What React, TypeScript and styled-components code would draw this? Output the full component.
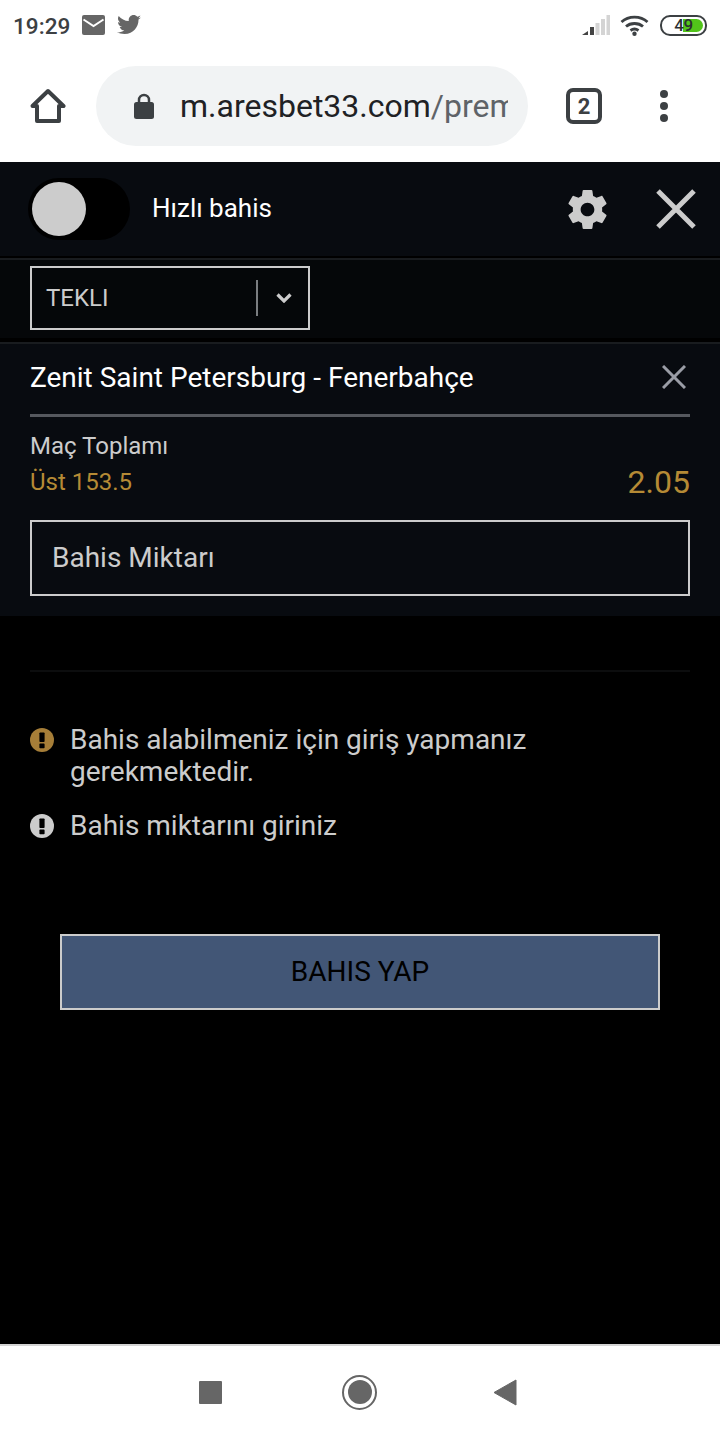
import React from "react";
import styled, { createGlobalStyle } from "styled-components";

const Global = createGlobalStyle`
  html, body { margin: 0; padding: 0; background: #000; }
  body { font-family: Roboto, "Noto Sans", sans-serif; }
  * { box-sizing: border-box; }
`;

const Page = styled.div`
  width: 720px;
  height: 1440px;
  display: flex;
  flex-direction: column;
  background: #000;
  overflow: hidden;
`;

const StatusBar = styled.div`
  height: 54px;
  flex: none;
  background: #fff;
  display: flex;
  align-items: center;
  justify-content: space-between;
  padding: 0 13px 4px 13px;
`;

const StatusGroup = styled.div<{ $gap: number }>`
  display: flex;
  align-items: center;
  gap: ${(p) => p.$gap}px;
`;

const Clock = styled.span`
  font-size: 22.6px;
  font-weight: 500;
  color: #3c4043;
  position: relative;
  top: 1px;
`;

const Battery = styled.div`
  width: 47px;
  height: 21px;
  margin-left: 1px;
  border: 2px solid #3c4043;
  border-radius: 10px;
  position: relative;
  overflow: hidden;
  background: #fff;
`;

const BatteryFill = styled.div`
  position: absolute;
  left: 21px;
  top: 2px;
  bottom: 2px;
  right: 2px;
  background: #52c41a;
  border-radius: 0 7px 7px 0;
`;

const BatteryLabel = styled.span`
  position: absolute;
  inset: 0;
  display: flex;
  align-items: center;
  justify-content: center;
  font-size: 17px;
  font-weight: 500;
  color: #2b2f33;
  letter-spacing: -0.5px;
`;

const Toolbar = styled.div`
  height: 108px;
  flex: none;
  background: #fff;
  display: flex;
  align-items: flex-start;
  padding: 12px 0 0 0;
`;

const HomeSlot = styled.div`
  width: 96px;
  height: 80px;
  flex: none;
  display: flex;
  align-items: center;
  justify-content: center;
`;

const Omnibox = styled.div`
  width: 432px;
  height: 80px;
  flex: none;
  border-radius: 40px;
  background: #f1f3f4;
  display: flex;
  align-items: center;
  padding-left: 38px;
  gap: 26px;
`;

const Url = styled.div`
  width: 328px;
  overflow: hidden;
  white-space: nowrap;
  font-size: 32px;
  color: #202124;
`;

const UrlPath = styled.span`
  color: #5f6368;
`;

const TabsSlot = styled.div`
  width: 38px;
  height: 80px;
  margin-left: 37px;
  flex: none;
  display: flex;
  align-items: center;
  justify-content: center;
`;

const TabCount = styled.div`
  width: 36px;
  height: 36px;
  border: 4px solid #3c4043;
  border-radius: 7px;
  display: flex;
  align-items: center;
  justify-content: center;
  font-size: 22px;
  font-weight: 700;
  color: #3c4043;
`;

const MenuSlot = styled.div`
  width: 12px;
  height: 80px;
  margin-left: 55px;
  flex: none;
  display: flex;
  flex-direction: column;
  align-items: center;
  justify-content: center;
  gap: 4px;
`;

const MenuDot = styled.span`
  width: 8px;
  height: 8px;
  border-radius: 50%;
  background: #3c4043;
`;

const Header = styled.div`
  height: 96px;
  flex: none;
  background: #080b10;
  border-bottom: 2px solid #000;
  display: flex;
  align-items: center;
  padding: 0 24px 0 28px;
`;

const Toggle = styled.div`
  width: 102px;
  height: 62px;
  flex: none;
  background: #000;
  border-radius: 31px;
  display: flex;
  align-items: center;
  padding-left: 4px;
`;

const Knob = styled.span`
  width: 54px;
  height: 54px;
  border-radius: 50%;
  background: #cccccc;
`;

const HeaderLabel = styled.span`
  margin: 0 0 2px 22px;
  font-size: 26px;
  color: #fff;
  flex: 1;
`;

const HeaderIcons = styled.div`
  display: flex;
  align-items: center;
  gap: 45px;
`;

const TypeBand = styled.div`
  height: 84px;
  flex: none;
  background: #050709;
  border-top: 2px solid #191c1f;
  border-bottom: 4px solid #000;
  padding: 6px 30px 0;
`;

const Select = styled.div`
  width: 280px;
  height: 64px;
  border: 2px solid #cccccc;
  display: flex;
  align-items: center;
  padding-left: 14px;
`;

const SelectText = styled.span`
  flex: 1;
  font-size: 24px;
  color: #cccccc;
`;

const SelectDivider = styled.span`
  width: 2px;
  height: 36px;
  background: #7a7d80;
`;

const SelectArrow = styled.div`
  width: 50px;
  padding-left: 2px;
  display: flex;
  justify-content: center;
`;

const Card = styled.div`
  height: 274px;
  flex: none;
  background: #080b10;
  border-top: 2px solid #191c1f;
  padding: 0 30px;
`;

const MatchRow = styled.div`
  height: 73px;
  padding-bottom: 4px;
  display: flex;
  align-items: center;
  justify-content: space-between;
  border-bottom: 3px solid #55585e;
`;

const MatchName = styled.span`
  font-size: 28px;
  color: #fff;
`;

const MarketName = styled.div`
  margin-top: 14px;
  font-size: 24px;
  line-height: 30px;
  color: #cccccc;
`;

const PickRow = styled.div`
  margin-top: 6px;
  height: 30px;
  display: flex;
  align-items: center;
  justify-content: space-between;
  color: #b58a35;
`;

const PickName = styled.span`
  font-size: 24px;
`;

const Odds = styled.span`
  font-size: 32px;
`;

const StakeInput = styled.div`
  margin-top: 23px;
  height: 76px;
  border: 2px solid #cccccc;
  display: flex;
  align-items: center;
  padding: 0 0 2px 20px;
  font-size: 28px;
  color: #cccccc;
`;

const Body = styled.div`
  flex: 1;
  background: #000;
  padding: 0 30px;
  display: flex;
  flex-direction: column;
`;

const FaintRule = styled.div`
  margin-top: 54px;
  height: 2px;
  background: #0c0d0e;
  flex: none;
`;

const Messages = styled.div`
  margin-top: 52px;
  display: flex;
  flex-direction: column;
  gap: 22px;
`;

const Message = styled.div`
  display: flex;
  align-items: flex-start;
  gap: 16px;
`;

const MessageText = styled.span`
  font-size: 28px;
  line-height: 32px;
  color: #cccccc;
  width: 560px;
`;

const IconSlot = styled.div`
  flex: none;
  width: 24px;
  height: 32px;
  display: flex;
  align-items: center;
`;

const BetButton = styled.div`
  margin: 92px 0 0 30px;
  width: 600px;
  height: 76px;
  padding-bottom: 2px;
  background: #425676;
  border: 2px solid #cccccc;
  display: flex;
  align-items: center;
  justify-content: center;
  font-size: 28px;
  color: #000;
`;

const NavBar = styled.div`
  height: 96px;
  flex: none;
  background: #fff;
  border-top: 2px solid #d4d4d4;
  display: flex;
  align-items: center;
  padding: 0 0 2px 199px;
`;

const NavSquare = styled.span`
  width: 23px;
  height: 23px;
  border-radius: 1px;
  background: #666;
  flex: none;
`;

const NavCircle = styled.span`
  margin-left: 120px;
  width: 35px;
  height: 35px;
  border-radius: 50%;
  border: 2.5px solid #666;
  display: flex;
  align-items: center;
  justify-content: center;
  flex: none;
  &::after {
    content: "";
    width: 24px;
    height: 24px;
    border-radius: 50%;
    background: #666;
  }
`;

const NavBack = styled.svg`
  margin-left: 116px;
  flex: none;
`;

const Alert = ({ color }: { color: string }) => (
  <svg width="24" height="24" viewBox="0 0 24 24">
    <circle cx="12" cy="12" r="12" fill={color} />
    <rect x="9.4" y="4.5" width="5.2" height="9.5" rx="0.8" fill="#000" />
    <rect x="9.4" y="15.6" width="5.2" height="4.6" rx="0.8" fill="#000" />
  </svg>
);

export default function App() {
  return (
    <Page>
      <Global />
      <StatusBar>
        <StatusGroup $gap={12}>
          <Clock>19:29</Clock>
          <svg width="23" height="20" viewBox="0 0 23 20">
            <rect width="23" height="20" rx="2" fill="#666" />
            <path d="M1.5 4.5 L11.5 11 L21.5 4.5" fill="none" stroke="#fff" strokeWidth="2" />
          </svg>
          <svg width="24" height="20" viewBox="0 0 24 20">
            <path
              d="M24 2.4c-.9.4-1.8.6-2.8.8 1-.6 1.8-1.6 2.2-2.7-1 .6-2 1-3.100 1.200C19.300.6 18 0 16.600 0c-2.700 0-4.900 2.200-4.900 4.900 0 .4 0 .8.100 1.100C7.700 5.800 4.100 3.900 1.700.900c-.4.700-.7 1.600-.7 2.500 0 1.700.9 3.200 2.200 4.100-.8 0-1.600-.2-2.200-.6v.1c0 2.400 1.700 4.400 3.900 4.800-.4.100-.8.200-1.300.2-.3 0-.6 0-.9-.1.600 2 2.400 3.400 4.600 3.400-1.700 1.300-3.800 2.100-6.100 2.100-.4 0-.8 0-1.200-.1C2.200 18.200 4.800 19 7.500 19c9.100 0 14-7.500 14-14v-.6c1-.7 1.800-1.500 2.500-2z"
              fill="#666"
            />
          </svg>
        </StatusGroup>
        <StatusGroup $gap={10}>
          <svg width="28" height="20" viewBox="0 0 28 20">
            <path d="M0 20 L6 16 V20 Z" fill="#444" />
            <rect x="8" y="12" width="4" height="8" fill="#444" />
            <rect x="13.500" y="8" width="4" height="12" fill="#d4d4d4" />
            <rect x="19" y="4" width="4" height="16" fill="#d4d4d4" />
            <rect x="24.500" y="0" width="3.500" height="20" fill="#d4d4d4" />
          </svg>
          <svg width="29" height="21" viewBox="0 0 29 21">
            <path d="M1.500 7 C8.500 .5 20.500 .5 27.500 7" fill="none" stroke="#3c4043" strokeWidth="2.800" />
            <path d="M6 11.500 C10.500 7.500 18.500 7.500 23 11.500" fill="none" stroke="#3c4043" strokeWidth="2.800" />
            <path d="M10.500 15.500 C12.800 13.800 16.200 13.800 18.500 15.500" fill="none" stroke="#3c4043" strokeWidth="2.800" />
            <circle cx="14.500" cy="18.800" r="2.200" fill="#3c4043" />
          </svg>
          <Battery>
            <BatteryFill />
            <BatteryLabel>49</BatteryLabel>
          </Battery>
        </StatusGroup>
      </StatusBar>

      <Toolbar>
        <HomeSlot>
          <svg width="36" height="36" viewBox="0 0 36 36">
            <path
              d="M18 3 L33.500 18 H29 V33 H7 V18 H2.500 Z"
              fill="none"
              stroke="#3c4043"
              strokeWidth="4"
              strokeLinejoin="round"
            />
          </svg>
        </HomeSlot>
        <Omnibox>
          <svg width="20" height="27" viewBox="0 0 20 27">
            <path d="M5 10 V7 a5 5 0 0 1 10 0 V10" fill="none" stroke="#3c4043" strokeWidth="2.500" />
            <rect x="0" y="9" width="20" height="17" rx="2.500" fill="#3c4043" />
          </svg>
          <Url>
            m.aresbet33.com<UrlPath>/premium</UrlPath>
          </Url>
        </Omnibox>
        <TabsSlot>
          <TabCount>2</TabCount>
        </TabsSlot>
        <MenuSlot>
          <MenuDot />
          <MenuDot />
          <MenuDot />
        </MenuSlot>
      </Toolbar>

      <Header>
        <Toggle>
          <Knob />
        </Toggle>
        <HeaderLabel>Hızlı bahis</HeaderLabel>
        <HeaderIcons>
          <svg width="47" height="47" viewBox="0 0 24 24">
            <path
              d="M19.430 12.980c.04-.32.07-.64.07-.98s-.03-.66-.07-.98l2.110-1.650c.19-.15.24-.42.12-.64l-2-3.460c-.12-.22-.39-.3-.61-.22l-2.490 1c-.52-.4-1.080-.73-1.690-.98l-.38-2.650C14.460 2.180 14.250 2 14 2h-4c-.25 0-.46.18-.49.42l-.38 2.650c-.61.25-1.170.59-1.690.98l-2.490-1c-.23-.09-.49 0-.61.22l-2 3.460c-.13.22-.07.49.12.64l2.110 1.650c-.04.32-.07.65-.07.98s.03.66.07.98l-2.110 1.650c-.19.15-.24.42-.12.64l2 3.460c.12.22.39.3.61.22l2.490-1c.52.4 1.080.73 1.690.98l.38 2.650c.03.24.24.42.49.42h4c.25 0 .46-.18.49-.42l.38-2.650c.61-.25 1.170-.59 1.690-.98l2.490 1c.23.09.49 0 .61-.22l2-3.460c.12-.22.07-.49-.12-.64l-2.110-1.650zM12 15.500c-1.930 0-3.500-1.570-3.500-3.500s1.570-3.500 3.500-3.500 3.500 1.570 3.500 3.500-1.570 3.500-3.500 3.500z"
              fill="#cccccc"
            />
          </svg>
          <svg width="40" height="40" viewBox="0 0 40 40">
            <path d="M2 2 L38 38 M38 2 L2 38" stroke="#cccccc" strokeWidth="5" />
          </svg>
        </HeaderIcons>
      </Header>

      <TypeBand>
        <Select>
          <SelectText>TEKLI</SelectText>
          <SelectDivider />
          <SelectArrow>
            <svg width="16" height="10" viewBox="0 0 16 10">
              <path d="M1.500 1.500 L8 8 L14.500 1.500" fill="none" stroke="#cccccc" strokeWidth="3.200" />
            </svg>
          </SelectArrow>
        </Select>
      </TypeBand>

      <Card>
        <MatchRow>
          <MatchName>Zenit Saint Petersburg - Fenerbahçe</MatchName>
          <svg width="24" height="24" viewBox="0 0 24 24" style={{ marginRight: 4 }}>
            <path d="M1 1 L23 23 M23 1 L1 23" stroke="#9a9da6" strokeWidth="3" />
          </svg>
        </MatchRow>
        <MarketName>Maç Toplamı</MarketName>
        <PickRow>
          <PickName>Üst 153.5</PickName>
          <Odds>2.05</Odds>
        </PickRow>
        <StakeInput>Bahis Miktarı</StakeInput>
      </Card>

      <Body>
        <FaintRule />
        <Messages>
          <Message>
            <IconSlot>
              <Alert color="#a67e38" />
            </IconSlot>
            <MessageText>Bahis alabilmeniz için giriş yapmanız gerekmektedir.</MessageText>
          </Message>
          <Message>
            <IconSlot>
              <Alert color="#cccccc" />
            </IconSlot>
            <MessageText>Bahis miktarını giriniz</MessageText>
          </Message>
        </Messages>
        <BetButton>BAHIS YAP</BetButton>
      </Body>

      <NavBar>
        <NavSquare />
        <NavCircle />
        <NavBack width="24" height="27" viewBox="0 0 24 27">
          <path d="M23 1 V26 L1 13.500 Z" fill="#666" stroke="#666" strokeWidth="1" strokeLinejoin="round" />
        </NavBack>
      </NavBar>
    </Page>
  );
}
